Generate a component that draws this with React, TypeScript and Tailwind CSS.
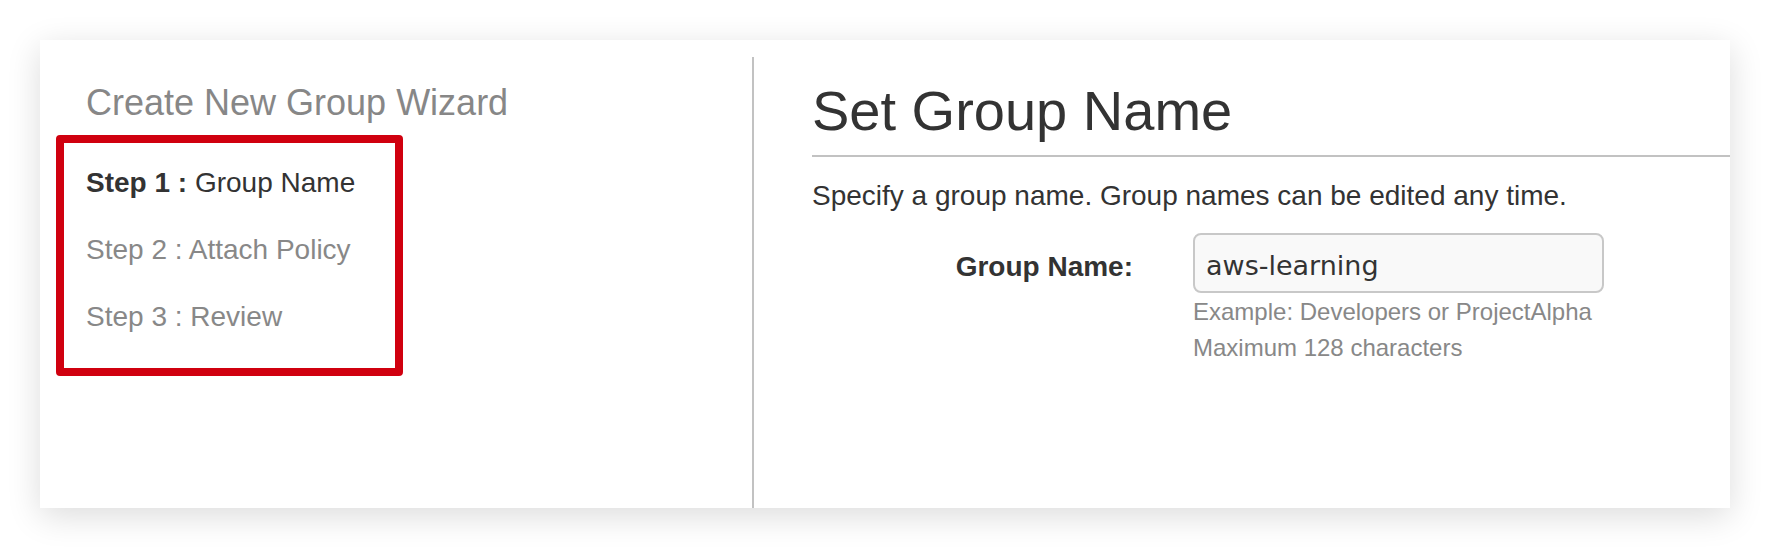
import React from 'react';

const steps = [
  { num: 1, label: 'Group Name', active: true },
  { num: 2, label: 'Attach Policy', active: false },
  { num: 3, label: 'Review', active: false },
];

const App: React.FC = () => {
  return (
    <div className="bg-white p-[40px] font-['Liberation_Sans',Arial,sans-serif]">
      <div className="flex h-[468px] w-full bg-white shadow-[0_8px_32px_rgba(0,0,0,0.14)]">
        {/* Wizard steps */}
        <div className="w-[712px] shrink-0 pl-[16px] pt-[40px]">
          <h2 className="ml-[30px] text-[36px] leading-[46px] text-[#878787]">Create New Group Wizard</h2>
          <div className="mt-[9px] box-border h-[241px] w-[347px] rounded-[4px] border-[8px] border-[#d0000f] pl-[22px] pt-[24px]">
            <ul className="flex flex-col gap-[35px]">
              {steps.map((s) => (
                <li
                  key={s.num}
                  className={`text-[28px] leading-[32px] ${s.active ? 'text-[#333333]' : 'text-[#888888]'}`}
                >
                  {s.active ? (
                    <>
                      <span className="font-bold">Step {s.num} :</span> {s.label}
                    </>
                  ) : (
                    <>Step {s.num} : {s.label}</>
                  )}
                </li>
              ))}
            </ul>
          </div>
        </div>

        <div className="mt-[17px] w-[2px] shrink-0 bg-[#c2c2c2]" />

        {/* Step content */}
        <div className="flex-1 pl-[58px] pt-[40px]">
          <h1 className="text-[56px] leading-[62px] text-[#333333]">Set Group Name</h1>
          <div className="mt-[13px] h-[2px] bg-[#c2c2c2]" />
          <p className="mt-[23px] text-[28px] leading-[32px] text-[#333333]">
            Specify a group name. Group names can be edited any time.
          </p>

          <div className="mt-[21px] flex">
            <label className="w-[321px] shrink-0 pt-[18px] text-right text-[28px] font-bold leading-[32px] text-[#333333]">
              Group Name:
            </label>
            <div className="ml-[60px]">
              <div className="box-border flex h-[60px] w-[411px] items-center rounded-[8px] border-2 border-[#c8c8c8] bg-[#f9f9f9] pl-[11px] pt-[6px] font-['DejaVu_Sans',sans-serif] text-[27px] text-[#333333]">
                aws-learning
              </div>
              <div className="pt-[1px] text-[24px] leading-[36px] text-[#888888]">
                <div>Example: Developers or ProjectAlpha</div>
                <div>Maximum 128 characters</div>
              </div>
            </div>
          </div>
        </div>
      </div>
    </div>
  );
};

export default App;
